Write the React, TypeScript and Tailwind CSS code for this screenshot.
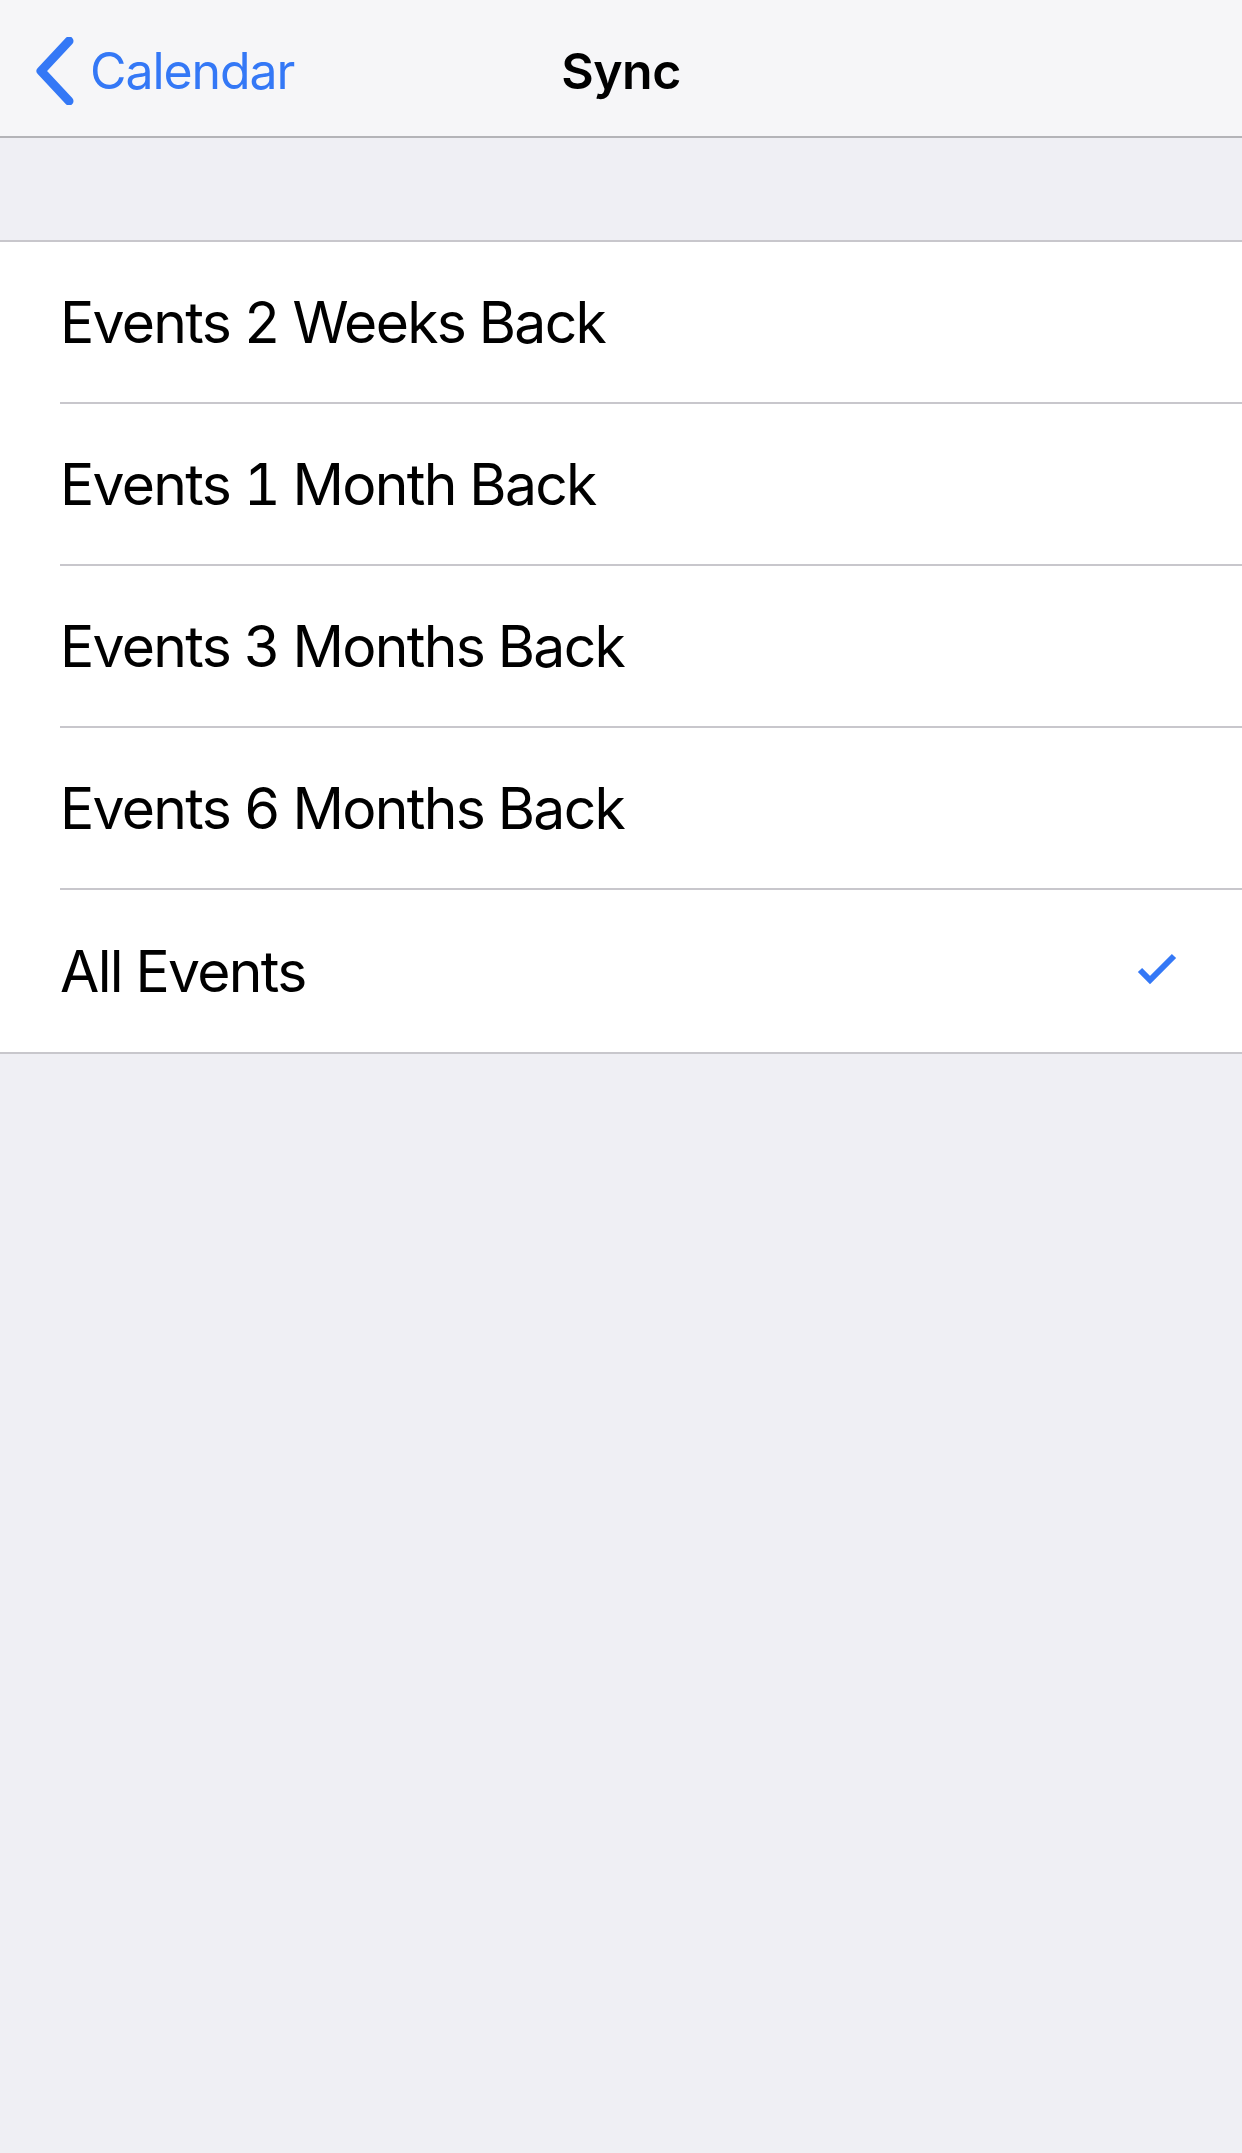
import React from "react";

const rows = [
  "Events 2 Weeks Back",
  "Events 1 Month Back",
  "Events 3 Months Back",
  "Events 6 Months Back",
  "All Events",
];

export default function App() {
  return (
    <div
      className="w-[1242px] min-h-[2153px] bg-[#efeff4] text-black"
      style={{ fontFamily: "Inter, 'Noto Sans', sans-serif" }}
    >
      <div className="relative h-[138px] bg-[#f6f6f8] border-b-[2px] border-[#b4b4b8] flex items-center justify-center">
        <div className="absolute left-0 top-0 h-full flex items-center pl-[35px] pt-[6px]">
          <svg width="44" height="68" viewBox="0 0 44 68" className="mr-[11px]">
            <path
              d="M34 4 L6 34 L34 64"
              fill="none"
              stroke="#3478f6"
              strokeWidth="9"
              strokeLinecap="round"
              strokeLinejoin="round"
            />
          </svg>
          <span className="text-[50px] text-[#3478f6] tracking-[-1.1px] leading-none">Calendar</span>
        </div>
        <span className="text-[50px] font-semibold tracking-[-0.5px] leading-none pt-[6px]">Sync</span>
      </div>
      <div className="h-[104px] border-b-[2px] border-[#c8c7cc]" />
      <div className="bg-white border-b-[2px] border-[#c8c7cc]">
        {rows.map((r, i) => (
          <div key={r} className="pl-[60px]">
            <div
              className={
                "h-[162px] flex items-center justify-between pr-[62px] " +
                (i < rows.length - 1 ? "border-b-[2px] border-[#c8c7cc]" : "")
              }
            >
              <span className="text-[57px] leading-none tracking-[-1.7px] tabular-nums">{r}</span>
              {i === rows.length - 1 && (
                <svg width="44" height="36" viewBox="0 0 44 36">
                  <path
                    d="M4 17 L14 27 L38 3"
                    fill="none"
                    stroke="#3478f6"
                    strokeWidth="6"
                  />
                </svg>
              )}
            </div>
          </div>
        ))}
      </div>
    </div>
  );
}
